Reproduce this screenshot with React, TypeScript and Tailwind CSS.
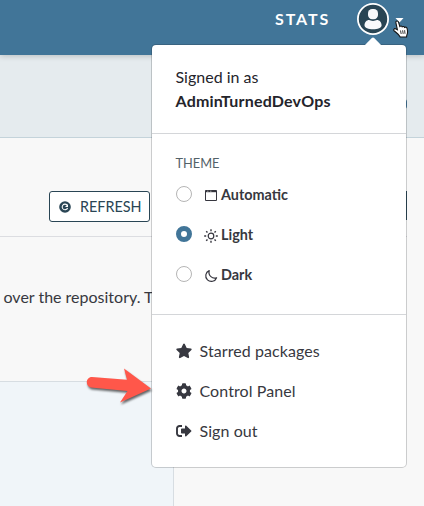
import type { ReactNode } from "react";

function Avatar() {
  return (
    <svg className="block h-8 w-8" viewBox="0 0 32 32">
      <circle cx="16" cy="16" r="15.1" fill="#294554" stroke="#fff" strokeWidth="1.8" />
      <rect x="11" y="6" width="10" height="10.2" rx="4.2" fill="#f8f9fb" />
      <path d="M7.500 22.600c0-3.400 2.200-5.500 4.500-5.500 1.400 0 2 .8 4 .8s2.700-.8 4-.8c2.400 0 4.600 2.100 4.600 5.500 0 2.400-4 3.700-8.500 3.700s-8.600-1.300-8.600-3.700z" fill="#f8f9fb" />
    </svg>
  );
}

function Radio({ checked }: { checked?: boolean }) {
  return checked ? (
    <span className="h-4 w-4 rounded-full border-[5px] border-[#417598] bg-white" />
  ) : (
    <span className="h-4 w-4 rounded-full border border-[#b5b5b5] bg-white" />
  );
}

function WindowIcon() {
  return (
    <svg className="h-[14px] w-[14px]" viewBox="0 0 14 14" fill="none" stroke="#36363f">
      <path d="M1.500 1.500h11v10h-11z" strokeWidth="1" />
      <path d="M1 2.500h12" strokeWidth="1.400" />
      <path d="M3 2.200h1.500M6 2.200h1.500" stroke="#bbb" strokeWidth=".8" />
    </svg>
  );
}

function SunIcon() {
  return (
    <svg className="h-[14px] w-[14px]" viewBox="0 0 14 14" fill="none" stroke="#36363f">
      <circle cx="7" cy="7" r="2.800" strokeWidth="1.200" />
      <path d="M7 .2v2M7 11.800v2M.2 7h2M11.800 7h2M2.200 2.200l1.300 1.300M10.500 10.500l1.300 1.300M2.200 11.800l1.300-1.300M10.500 3.500l1.300-1.300" strokeWidth="1.400" />
    </svg>
  );
}

function MoonIcon() {
  return (
    <svg className="h-[14px] w-[14px]" viewBox="0 0 14 14" fill="none" stroke="#36363f" strokeWidth="1.200" strokeLinejoin="round">
      <path d="M5.200 1.600A5.600 5.600 0 1 0 12.600 8.700C8.500 10 4 7 5.200 1.600z" />
    </svg>
  );
}

function StarIcon() {
  return (
    <svg className="h-4 w-4" viewBox="0 0 16 16" fill="#373840">
      <path d="M7.200 1.100c.4-.7 1.200-.7 1.600 0l1.900 3.800 4.200.6c.8.100 1 .9.500 1.400l-3.100 3 .8 4.200c.1.800-.6 1.300-1.300.9L8 13l-3.800 2c-.7.400-1.400-.1-1.300-.9l.8-4.200-3.100-3c-.5-.5-.3-1.300.5-1.400l4.200-.6z" />
    </svg>
  );
}

function GearIcon() {
  return (
    <svg className="h-4 w-4" viewBox="0 0 512 512" fill="#373840">
      <path d="M487.400 315.700l-42.600-24.600c4.300-23.200 4.300-47 0-70.200l42.600-24.600c4.900-2.800 7.100-8.600 5.500-14-11.100-35.600-30-67.800-54.700-94.600-3.800-4.100-10-5.100-14.800-2.300L380.800 110c-17.900-15.400-38.500-27.300-60.800-35.100V25.800c0-5.600-3.900-10.500-9.400-11.700-36.700-8.200-74.300-7.800-109.200 0-5.500 1.200-9.400 6.100-9.400 11.700V75c-22.200 7.900-42.800 19.800-60.800 35.100L88.700 85.500c-4.900-2.800-11-1.900-14.800 2.300-24.700 26.700-43.600 58.900-54.700 94.600-1.700 5.400.6 11.200 5.500 14L67.300 221c-4.300 23.200-4.300 47 0 70.200l-42.600 24.600c-4.900 2.800-7.100 8.600-5.500 14 11.100 35.600 30 67.800 54.700 94.600 3.800 4.100 10 5.100 14.800 2.300l42.600-24.600c17.900 15.400 38.500 27.300 60.800 35.100v49.200c0 5.600 3.900 10.500 9.400 11.700 36.700 8.200 74.300 7.800 109.200 0 5.500-1.200 9.400-6.100 9.400-11.700v-49.200c22.200-7.900 42.800-19.800 60.800-35.100l42.600 24.600c4.900 2.800 11 1.900 14.800-2.300 24.700-26.700 43.600-58.900 54.700-94.600 1.500-5.500-.7-11.300-5.600-14.100zM256 336c-44.100 0-80-35.900-80-80s35.900-80 80-80 80 35.900 80 80-35.900 80-80 80z" />
    </svg>
  );
}

function SignOutIcon() {
  return (
    <svg className="h-4 w-4" viewBox="0 0 16 16" fill="#373840">
      <path d="M6 3H3.500A2.500 2.500 0 0 0 1 5.500v5A2.500 2.500 0 0 0 3.500 13H6" fill="none" stroke="#373840" strokeWidth="1.900" />
      <path d="M5 6.200c0-.5.300-.8.800-.8H9V3.200c0-.8.800-1 1.300-.5l4.900 4.700c.4.300.4.800 0 1.200l-4.900 4.700c-.5.500-1.300.2-1.300-.5v-2.200H5.800c-.5 0-.8-.3-.8-.8z" />
    </svg>
  );
}

function RefreshIcon() {
  return (
    <svg className="h-3 w-3" viewBox="0 0 12 12">
      <circle cx="6" cy="6" r="5.800" fill="#294554" />
      <path d="M8 4a2.800 2.800 0 1 0 .6 3" fill="none" stroke="#fff" strokeWidth="1.100" />
      <path d="M9 3v3H6z" fill="#fff" />
    </svg>
  );
}

function ThemeOption({ icon, label, checked }: { icon: ReactNode; label: string; checked?: boolean }) {
  return (
    <div className="flex h-10 items-center">
      <Radio checked={checked} />
      <span className="ml-3 mt-[3px]">{icon}</span>
      <span className="ml-[3px] mt-px text-[14.400px] font-bold leading-5">{label}</span>
    </div>
  );
}

function MenuItem({ icon, label }: { icon: ReactNode; label: string }) {
  return (
    <div className="flex h-10 items-center">
      {icon}
      <span className="ml-[7.500px] text-base leading-6 tracking-[0.080px]">{label}</span>
    </div>
  );
}

function AccountMenu() {
  return (
    <div className="absolute left-[151px] top-11 flex h-[424px] w-64 flex-col rounded-[5px] border border-[#1b1f2333] bg-white bg-clip-padding text-[#373840]">
      <svg className="absolute -top-[8px] left-[212px] h-[9px] w-[18px]" viewBox="0 0 18 9">
        <path d="M0 9l7.800-8q1.200-1 2.400 0L18 9z" fill="#fff" />
      </svg>
      <div className="h-[89px] border-b border-[#d4d6d9] pl-6 pt-5 text-base leading-6 text-[#24242b]">
        <div className="-ml-[0.500px]">Signed in as</div>
        <div className="-ml-[0.500px] font-bold tracking-[0.190px]">AdminTurnedDevOps</div>
      </div>
      <div className="h-[181px] border-b border-[#d4d6d9] pl-6 pt-[19px]">
        <div className="-ml-[0.500px] mb-px text-[12.800px] leading-5 text-[#536168]">THEME</div>
        <ThemeOption icon={<WindowIcon />} label="Automatic" />
        <ThemeOption icon={<SunIcon />} label="Light" checked />
        <ThemeOption icon={<MoonIcon />} label="Dark" />
      </div>
      <div className="pl-6 pt-4">
        <MenuItem icon={<StarIcon />} label="Starred packages" />
        <MenuItem icon={<GearIcon />} label="Control Panel" />
        <MenuItem icon={<SignOutIcon />} label="Sign out" />
      </div>
    </div>
  );
}

function PointerArrow() {
  return (
    <svg className="absolute left-[84px] top-[365px] h-11 w-[70px] drop-shadow-[1px_2px_1px_rgba(0,0,0,0.6)]" viewBox="0 0 70 44">
      <path d="M8 12l35 2.800L40 3.500 67 23.500 36 37.500 43.500 26 7 22.500C1 21.500 1.500 12 8 12z" fill="#ff574a" />
    </svg>
  );
}

function HandCursor() {
  return (
    <svg className="absolute left-[393px] top-[20px] h-[18px] w-4" viewBox="0 0 16 18">
      <path d="M2.800 2.300c0-1.600 2.300-1.800 2.800 0L6.800 6.500c.8-.8 2-.6 2.400.4.900-.8 2-.4 2.300.5 1.200-.7 2.400.1 2.700 1.400.5 2.200.5 4.800-.4 6.400l-.2 1.800H7.200C6.300 14.500 3.400 12.800 1.300 11c-1.300-1.200-.1-2.700 1.200-2.200l1.900 1z" fill="#fff" stroke="#151515" strokeWidth="1.100" />
      <path d="M7.500 10.500l.7 3.500M9.600 10.300l.6 3.600M11.600 10.200l.4 3.600" stroke="#222" strokeWidth=".9" />
    </svg>
  );
}

export default function App() {
  return (
    <div className="relative h-[506px] w-[424px] overflow-hidden bg-[#f8f8f8] font-['Lato',sans-serif] text-[#373840]">
      <header className="relative flex h-[55px] items-start bg-[#417598] pl-[275px] shadow-[0_1px_6px_rgba(0,0,0,0.200)]">
        <span className="mt-[7px] w-[82px] text-base font-bold leading-6 tracking-[1.900px] text-white">STATS</span>
        <div className="mt-[3px]"><Avatar /></div>
        <svg className="ml-[6px] mt-[18px] h-[5px] w-[9px]" viewBox="0 0 9 5"><path d="M.5 0h8l-4 4.500z" fill="#fff" /></svg>
      </header>
      <section className="flex h-[83px] items-center justify-end border-b border-[#c4d3da] bg-[#e5ebee] pr-[17px] pt-[15px]">
        <span className="h-[10px] w-3 rounded-r-[3px] bg-[#417598]" />
      </section>
      <section className="flex h-[99px] w-[407px] items-start border-b border-[#dcdde1] pl-[49px] pt-[53px]">
        <button className="flex h-[31px] w-[101px] shrink-0 items-center rounded-[3px] border border-[#294554] bg-white pl-[9px] text-[#294554]">
          <RefreshIcon />
          <span className="ml-[9px] text-[14.400px] leading-5">REFRESH</span>
        </button>
        <span className="ml-auto h-[29px] w-[100px] bg-[#294554]" />
      </section>
      <section className="h-[144px] pl-[3.500px] pt-12">
        <p className="whitespace-nowrap text-base leading-6">over the repository. The</p>
      </section>
      <section className="h-[125px] w-[174px] border-r border-t border-[#d7dde2] bg-[#f0f5f9]" />
      <AccountMenu />
      <PointerArrow />
      <HandCursor />
    </div>
  );
}
